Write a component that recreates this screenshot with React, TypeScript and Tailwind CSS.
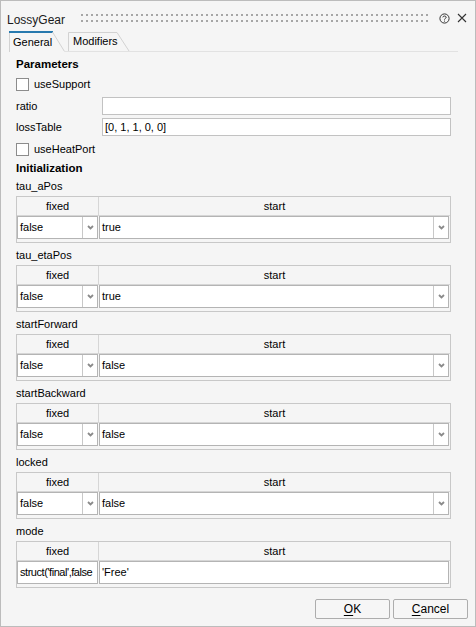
const font = "font-['Liberation_Sans',Arial,sans-serif]";

function Chevron() {
  return (
    <svg width="7" height="5" viewBox="0 0 7 5">
      <path d="M1 1 L3.5 3.5 L6 1" fill="none" stroke="#8a8a8a" strokeWidth="1.8" />
    </svg>
  );
}

function Checkbox({ label }: { label: string }) {
  return (
    <div className="flex h-[17px] items-center">
      <div className="h-[13px] w-[13px] border border-[#8c8c8c] bg-white" />
      <span className="ml-[5px]">{label}</span>
    </div>
  );
}

function Field({ label, value }: { label: string; value: string }) {
  return (
    <div className="flex h-[18px] items-center">
      <span className="w-[86px]">{label}</span>
      <div className="flex h-[18px] w-[349px] items-center border border-[#c2c2c2] bg-white pl-[2px]">
        {value}
      </div>
    </div>
  );
}

type Row = { label: string; fixed: string; start: string; dropdown?: boolean };

function InitTable({ row, first }: { row: Row; first: boolean }) {
  const dd = row.dropdown !== false;
  return (
    <div className={first ? "mt-[1px]" : "mt-[4px]"}>
      <div className="flex h-[16px] items-center">{row.label}</div>
      <div className="mt-[2px] flex h-[47px] w-[435px] flex-col border border-[#c8c8c8]">
        <div className="flex h-[19px] border-b border-[#d6d6d6]">
          <div className="flex w-[82px] items-center justify-center border-r border-[#d6d6d6]">fixed</div>
          <div className="flex flex-1 items-center justify-center">start</div>
        </div>
        <div className="flex h-[23px]">
          <div className="flex w-[81px] border border-[#b4b4b4] bg-white">
            <div
              className={`flex flex-1 items-center overflow-hidden whitespace-nowrap pl-[2px] ${
                dd ? "" : "tracking-[-0.45px]"
              }`}
            >
              {row.fixed}
            </div>
            {dd && (
              <div className="flex w-[15px] items-center justify-center border-l border-[#c8c8c8]">
                <Chevron />
              </div>
            )}
          </div>
          <div className="ml-[1px] flex w-[350px] border border-[#b4b4b4] bg-white">
            <div className="flex flex-1 items-center overflow-hidden whitespace-nowrap pl-[2px]">{row.start}</div>
            {dd && (
              <div className="flex w-[15px] items-center justify-center border-l border-[#c8c8c8]">
                <Chevron />
              </div>
            )}
          </div>
        </div>
      </div>
    </div>
  );
}

const rows: Row[] = [
  { label: "tau_aPos", fixed: "false", start: "true" },
  { label: "tau_etaPos", fixed: "false", start: "true" },
  { label: "startForward", fixed: "false", start: "false" },
  { label: "startBackward", fixed: "false", start: "false" },
  { label: "locked", fixed: "false", start: "false" },
  { label: "mode", fixed: "struct('final',false", start: "'Free'", dropdown: false },
];

export default function App() {
  return (
    <div className={`flex h-[627px] w-[476px] flex-col border border-[#bcbcbc] bg-[#f5f5f5] text-[11px] text-black ${font}`}>
      {/* title bar */}
      <div className="flex h-[30px] items-center pl-[6px] pt-[8px]">
        <span className="w-[74px] text-[12px] text-[#1a1a1a]">LossyGear</span>
        <svg className="mt-[-3px]" width="350" height="9">
          <defs>
            <pattern id="grip" width="5" height="9" patternUnits="userSpaceOnUse">
              <rect x="0" y="0" width="2" height="2" fill="#a6a6a6" />
              <rect x="0" y="6" width="2" height="2" fill="#a6a6a6" />
            </pattern>
          </defs>
          <rect width="350" height="9" fill="url(#grip)" />
        </svg>
        <svg className="ml-[8px] mt-[-4px]" width="11" height="11" viewBox="0 0 11 11">
          <circle cx="5.5" cy="5.5" r="4.6" fill="none" stroke="#333" strokeWidth="1" />
          <path d="M3.8 4.3 C3.8 2.6 7.2 2.6 7.2 4.3 C7.2 5.4 5.5 5.4 5.5 6.6" fill="none" stroke="#333" strokeWidth="1" />
          <rect x="5" y="7.6" width="1" height="1" fill="#333" />
        </svg>
        <svg className="ml-[7px] mt-[-4px]" width="10" height="10" viewBox="0 0 10 10">
          <path d="M1 1 L9 9 M9 1 L1 9" stroke="#333" strokeWidth="1.1" />
        </svg>
      </div>

      {/* tabs */}
      <div className="flex h-[21px]">
        <div className="relative ml-[8px] flex h-[21px] w-[56px] items-center pl-[4px] pt-[1px]">
          <svg className="absolute inset-0" width="56" height="21">
            <path d="M0.5 2 L0.5 21" stroke="#d2d2d2" />
            <rect x="0" y="0" width="44" height="2" fill="#2779ae" />
            <path d="M43.5 1 L55.5 20.5" stroke="#d2d2d2" />
          </svg>
          <span className="relative">General</span>
        </div>
        <div className="mr-[17px] flex flex-1 items-end border-b border-[#e2e2e2]">
          <div className="relative ml-[3px] flex h-[19px] w-[62px] items-center pl-[5px]">
            <svg className="absolute inset-0" width="62" height="19">
              <path d="M0.5 19 L0.5 0.5 L49 0.5 L61 19" fill="none" stroke="#d2d2d2" />
            </svg>
            <span className="relative">Modifiers</span>
          </div>
        </div>
      </div>

      {/* content */}
      <div className="flex flex-col pl-[15px]">
        <div className="mt-[5px] flex h-[16px] items-center text-[11.5px] font-bold">Parameters</div>
        <div className="mt-[3px]">
          <Checkbox label="useSupport" />
        </div>
        <div className="mt-[4px]">
          <Field label="ratio" value="" />
        </div>
        <div className="mt-[3px]">
          <Field label="lossTable" value="[0, 1, 1, 0, 0]" />
        </div>
        <div className="mt-[5px]">
          <Checkbox label="useHeatPort" />
        </div>
        <div className="mt-[3px] flex h-[16px] items-center text-[11.5px] font-bold">Initialization</div>
        {rows.map((r, i) => (
          <InitTable key={r.label} row={r} first={i === 0} />
        ))}
      </div>

      <div className="flex-1" />

      {/* footer */}
      <div className="mb-[7px] flex justify-end gap-[3px] pr-[7px] text-[12px]">
        <button className="h-[20px] w-[75px] rounded-[2px] border border-[#adadad] bg-[#f6f6f6]">
          <span className="underline underline-offset-2">O</span>K
        </button>
        <button className="h-[20px] w-[75px] rounded-[2px] border border-[#adadad] bg-[#f6f6f6]">
          <span className="underline underline-offset-2">C</span>ancel
        </button>
      </div>
    </div>
  );
}
